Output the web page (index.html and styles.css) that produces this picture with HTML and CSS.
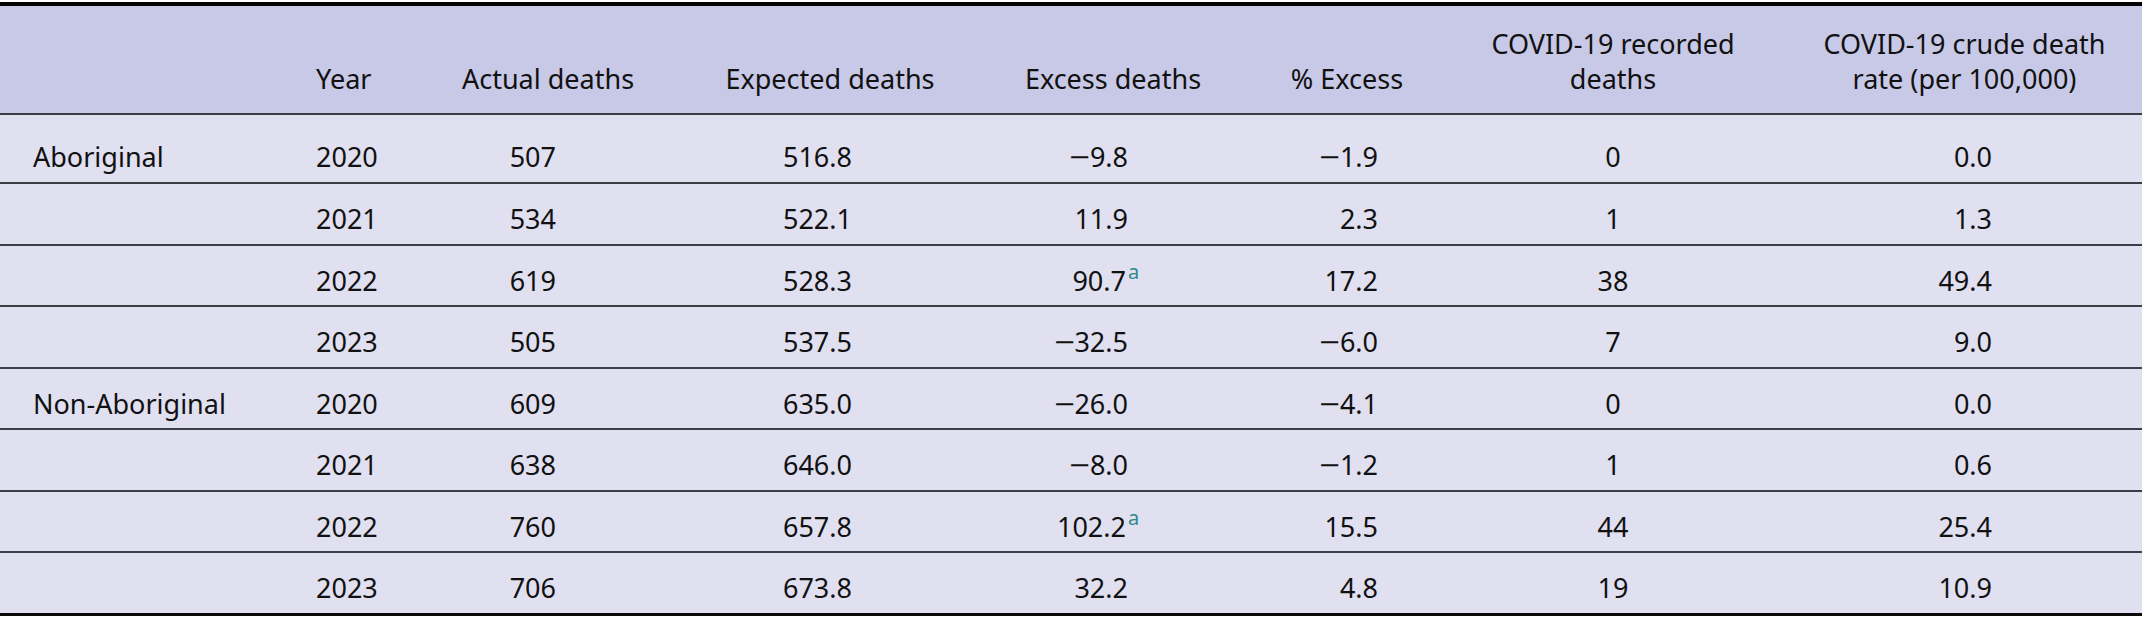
FILE: index.html
```html
<!DOCTYPE html>
<html lang="en">
<head>
<meta charset="utf-8">
<title>Excess deaths</title>
<link rel="stylesheet" href="styles.css">
</head>
<body>
<table class="tbl">
  <colgroup>
    <col class="c-label">
    <col class="c-year">
    <col class="c-actual">
    <col class="c-expected">
    <col class="c-excess">
    <col class="c-pct">
    <col class="c-covid">
    <col class="c-rate">
  </colgroup>
  <thead>
    <tr>
      <th class="label"></th>
      <th class="year">Year</th>
      <th class="ctr">Actual deaths</th>
      <th class="ctr">Expected deaths</th>
      <th class="ctr">Excess deaths</th>
      <th class="ctr">% Excess</th>
      <th class="ctr">COVID-19 recorded<br>deaths</th>
      <th class="ctr">COVID-19 crude death<br>rate (per 100,000)</th>
    </tr>
  </thead>
  <tbody>
    <tr class="first">
      <td class="label">Aboriginal</td><td class="year">2020</td><td class="actual">507</td><td class="expected">516.8</td><td class="excess"><span class="neg">−</span>9.8</td><td class="pct"><span class="neg">−</span>1.9</td><td class="covid">0</td><td class="rate">0.0</td>
    </tr>
    <tr>
      <td class="label"></td><td class="year">2021</td><td class="actual">534</td><td class="expected">522.1</td><td class="excess">11.9</td><td class="pct">2.3</td><td class="covid">1</td><td class="rate">1.3</td>
    </tr>
    <tr>
      <td class="label"></td><td class="year">2022</td><td class="actual">619</td><td class="expected">528.3</td><td class="excess">90.7<sup class="fn">a</sup></td><td class="pct">17.2</td><td class="covid">38</td><td class="rate">49.4</td>
    </tr>
    <tr>
      <td class="label"></td><td class="year">2023</td><td class="actual">505</td><td class="expected">537.5</td><td class="excess"><span class="neg">−</span>32.5</td><td class="pct"><span class="neg">−</span>6.0</td><td class="covid">7</td><td class="rate">9.0</td>
    </tr>
    <tr>
      <td class="label">Non-Aboriginal</td><td class="year">2020</td><td class="actual">609</td><td class="expected">635.0</td><td class="excess"><span class="neg">−</span>26.0</td><td class="pct"><span class="neg">−</span>4.1</td><td class="covid">0</td><td class="rate">0.0</td>
    </tr>
    <tr>
      <td class="label"></td><td class="year">2021</td><td class="actual">638</td><td class="expected">646.0</td><td class="excess"><span class="neg">−</span>8.0</td><td class="pct"><span class="neg">−</span>1.2</td><td class="covid">1</td><td class="rate">0.6</td>
    </tr>
    <tr>
      <td class="label"></td><td class="year">2022</td><td class="actual">760</td><td class="expected">657.8</td><td class="excess">102.2<sup class="fn">a</sup></td><td class="pct">15.5</td><td class="covid">44</td><td class="rate">25.4</td>
    </tr>
    <tr class="last">
      <td class="label"></td><td class="year">2023</td><td class="actual">706</td><td class="expected">673.8</td><td class="excess">32.2</td><td class="pct">4.8</td><td class="covid">19</td><td class="rate">10.9</td>
    </tr>
  </tbody>
</table>
</body>
</html>
```

FILE: styles.css
```css
html, body {
  margin: 0;
  padding: 0;
  background: #ffffff;
}

.tbl {
  width: 2142px;
  margin-top: 2px;
  table-layout: fixed;
  border-collapse: separate;
  border-spacing: 0;
  border-top: 4px solid #000000;
  font-family: "Noto Sans", "Open Sans", sans-serif;
  font-size: 27px;
  line-height: 35px;
  color: #111111;
}

.c-label { width: 313px; }
.c-year { width: 94px; }
.c-actual { width: 282px; }
.c-expected { width: 282px; }
.c-excess { width: 284px; }
.c-pct { width: 184px; }
.c-covid { width: 348px; }
.c-rate { width: 355px; }

.tbl th {
  box-sizing: border-box;
  height: 109px;
  padding: 0 0 17px 0;
  background: #c8c8e7;
  font-weight: 400;
  vertical-align: bottom;
  border-bottom: 2px solid #3d3d46;
  white-space: nowrap;
}

.tbl th.label { text-align: left; }
.tbl th.year { text-align: left; padding-left: 3px; }
.tbl th.ctr { text-align: center; }

.tbl td {
  box-sizing: border-box;
  height: 61.5px;
  padding: 17px 0 0 0;
  background: #e0e0f1;
  vertical-align: top;
  border-bottom: 2px solid #3d3d46;
  white-space: nowrap;
}

.tbl tr.first td {
  height: 69px;
  padding-top: 24px;
}

.tbl tr.last td {
  height: 63px;
  border-bottom: 3px solid #0a0a0a;
}

.tbl td.label { text-align: left; padding-left: 33px; }
.tbl td.year { text-align: left; padding-left: 3px; }
.tbl td.actual { text-align: right; padding-right: 133px; }
.tbl td.expected { text-align: right; padding-right: 119px; }
.tbl td.excess { text-align: right; padding-right: 127px; }
.tbl td.pct { text-align: right; padding-right: 61px; }
.tbl td.covid { text-align: center; }
.tbl td.rate { text-align: right; padding-right: 150px; }

.neg {
  display: inline-block;
  transform: scaleX(1.35);
  margin: 0 2px 0 2px;
}

.fn {
  display: inline-block;
  width: 0;
  font-size: 20px;
  line-height: 0;
  vertical-align: 12px;
  padding-left: 2px;
  color: #2f8a8e;
}
```
